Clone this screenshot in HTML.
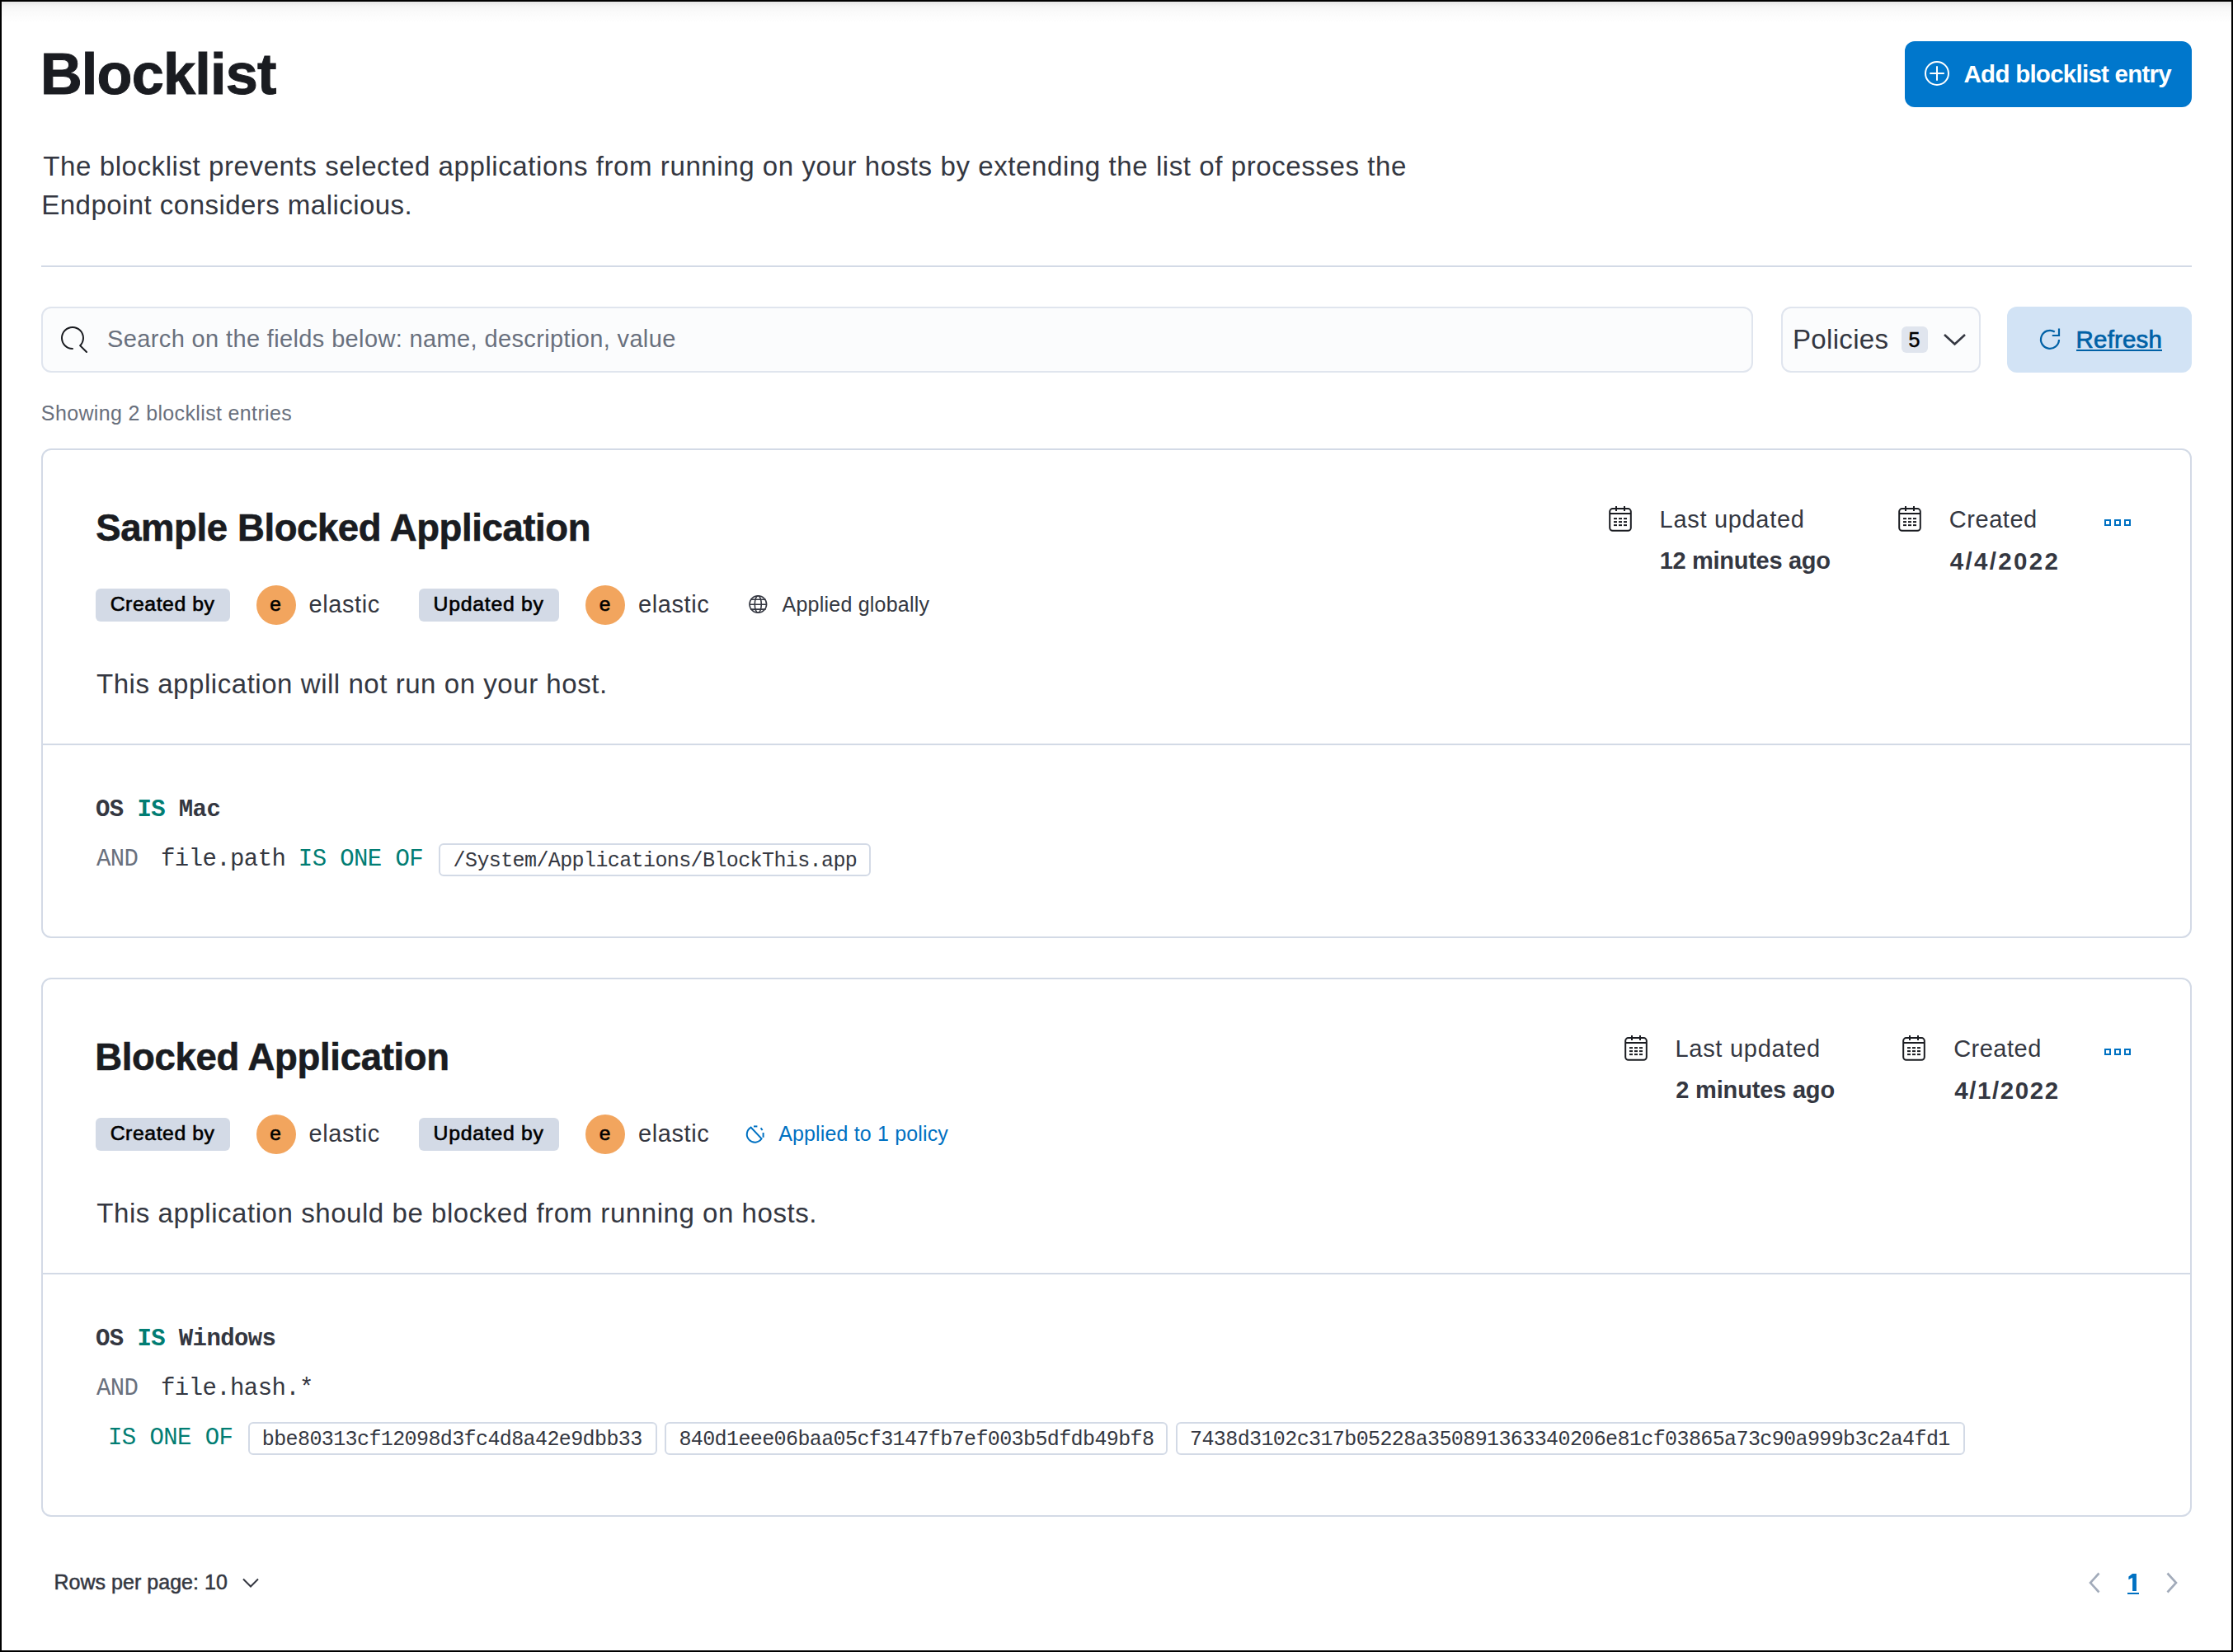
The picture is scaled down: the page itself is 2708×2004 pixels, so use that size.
<!DOCTYPE html>
<html><head><meta charset="utf-8"><style>
html,body{margin:0;padding:0;}
body{width:2708px;height:2004px;background:#000;position:relative;overflow:hidden;}
#page{position:absolute;left:2px;top:2px;width:2704px;height:2000px;background:#fff;overflow:hidden}
#shade{position:absolute;left:0;top:0;width:2704px;height:26px;background:linear-gradient(#e6e6e6,#f4f4f4 20%,#fafafa 45%,#fff)}
.t{position:absolute;white-space:pre;}
</style></head><body><div id="page"><div id="shade"></div></div>
<div style="position:absolute;left:0;top:0;width:2708px;height:2004px">
<div class="t" style="left:48.90px;top:55.18px;font-size:70.30px;line-height:70.30px;font-family:'Liberation Sans', sans-serif;font-weight:bold;color:#1a1c21;letter-spacing:-0.818px;-webkit-text-stroke:1px #1a1c21">Blocklist</div>
<div class="t" style="left:52.26px;top:184.97px;font-size:33.10px;line-height:33.10px;font-family:'Liberation Sans', sans-serif;font-weight:normal;color:#343741;letter-spacing:0.558px;">The blocklist prevents selected applications from running on your hosts by extending the list of processes the</div>
<div class="t" style="left:50.28px;top:232.37px;font-size:33.10px;line-height:33.10px;font-family:'Liberation Sans', sans-serif;font-weight:normal;color:#343741;letter-spacing:0.423px;">Endpoint considers malicious.</div>
<div style="position:absolute;left:2310px;top:50px;width:348px;height:80px;box-sizing:border-box;background:#0077cc;border-radius:12px"></div>
<svg style="position:absolute;left:2332px;top:72px" width="34" height="34" viewBox="0 0 34 34"><circle cx="17" cy="17" r="14" fill="none" stroke="#fff" stroke-width="2"/><path d="M17 8.3v17.5M8.3 17h17.5" stroke="#fff" stroke-width="2"/></svg>
<div class="t" style="left:2381.57px;top:75.02px;font-size:29.50px;line-height:29.50px;font-family:'Liberation Sans', sans-serif;font-weight:bold;color:#fff;letter-spacing:-0.742px;">Add blocklist entry</div>
<div style="position:absolute;left:50px;top:322px;width:2608px;height:2px;box-sizing:border-box;background:#d3dae6"></div>
<div style="position:absolute;left:50px;top:372px;width:2076px;height:80px;box-sizing:border-box;background:#fbfcfd;border:2px solid #e0e5ee;border-radius:12px"></div>
<svg style="position:absolute;left:74px;top:396px" width="32" height="32" viewBox="0 0 16 16"><path fill="#1a1c21" d="M11.271 11.978l3.872 3.873a.502.502 0 00.708 0 .502.502 0 000-.708l-3.565-3.564c2.38-2.747 2.267-6.923-.342-9.532-2.73-2.73-7.17-2.73-9.898 0-2.728 2.729-2.728 7.17 0 9.9a6.955 6.955 0 004.949 2.05.5.5 0 000-1 5.96 5.96 0 01-4.242-1.757 6.01 6.01 0 010-8.486c2.337-2.34 6.143-2.34 8.484 0a6.01 6.01 0 010 8.486.5.5 0 00.034.738z"/></svg>
<div class="t" style="left:130.08px;top:397.25px;font-size:29.00px;line-height:29.00px;font-family:'Liberation Sans', sans-serif;font-weight:normal;color:#69707d;letter-spacing:0.365px;">Search on the fields below: name, description, value</div>
<div style="position:absolute;left:2160px;top:372px;width:242px;height:80px;box-sizing:border-box;background:#fbfcfd;border:2px solid #e0e5ee;border-radius:12px"></div>
<div class="t" style="left:2173.98px;top:394.77px;font-size:33.10px;line-height:33.10px;font-family:'Liberation Sans', sans-serif;font-weight:normal;color:#343741;letter-spacing:0.294px;">Policies</div>
<div style="position:absolute;left:2306px;top:396px;width:32px;height:32px;box-sizing:border-box;background:#e0e5ee;border-radius:6px"></div>
<div class="t" style="left:2314.50px;top:400.33px;font-size:25.00px;line-height:25.00px;font-family:'Liberation Sans', sans-serif;font-weight:normal;color:#000;letter-spacing:0.000px;-webkit-text-stroke:0.5px #000">5</div>
<svg style="position:absolute;left:2354px;top:402px" width="32" height="20" viewBox="0 0 32 20"><path d="M4 4l12.5 11.5 12.5-11.5" fill="none" stroke="#343741" stroke-width="2.6"/></svg>
<div style="position:absolute;left:2434px;top:372px;width:224px;height:80px;box-sizing:border-box;background:#d2e3f5;border-radius:12px"></div>
<svg style="position:absolute;left:2470px;top:394px" width="32" height="36" viewBox="0 0 32 36"><path d="M21.8 8.5 A11 11 0 1 0 27 18" fill="none" stroke="#0061a6" stroke-width="2.2"/><path d="M27 4.5v8.5h-8.2" fill="none" stroke="#0061a6" stroke-width="2.2"/></svg>
<div class="t" style="left:2517.58px;top:397.02px;font-size:29.50px;line-height:29.50px;font-family:'Liberation Sans', sans-serif;font-weight:normal;color:#0061a6;letter-spacing:0.174px;-webkit-text-stroke:0.7px #0061a6">Refresh</div>
<div style="position:absolute;left:2518px;top:424px;width:104px;height:2px;box-sizing:border-box;background:#0061a6"></div>
<div class="t" style="left:49.86px;top:489.13px;font-size:25.00px;line-height:25.00px;font-family:'Liberation Sans', sans-serif;font-weight:normal;color:#69707d;letter-spacing:0.359px;">Showing 2 blocklist entries</div>
<div style="position:absolute;left:50px;top:544px;width:2608px;height:594px;box-sizing:border-box;border:2px solid #d3dae6;border-radius:12px;background:#fff"></div>
<div style="position:absolute;left:52px;top:902px;width:2604px;height:2px;box-sizing:border-box;background:#d3dae6"></div>
<div class="t" style="left:116.19px;top:618.48px;font-size:45.50px;line-height:45.50px;font-family:'Liberation Sans', sans-serif;font-weight:bold;color:#1a1c21;letter-spacing:-0.393px;-webkit-text-stroke:0.6px #1a1c21">Sample Blocked Application</div>
<div style="position:absolute;left:116px;top:714px;width:163px;height:40px;box-sizing:border-box;background:#d3dae6;border-radius:6px"></div>
<div class="t" style="left:133.64px;top:720.70px;font-size:24.80px;line-height:24.80px;font-family:'Liberation Sans', sans-serif;font-weight:normal;color:#000;letter-spacing:0.566px;-webkit-text-stroke:0.6px #000">Created by</div>
<div style="position:absolute;left:311px;top:710px;width:48px;height:48px;box-sizing:border-box;background:#f2a55e;border-radius:50%"></div>
<div class="t" style="left:327.26px;top:721.46px;font-size:24.50px;line-height:24.50px;font-family:'Liberation Sans', sans-serif;font-weight:normal;color:#000;letter-spacing:0.000px;-webkit-text-stroke:0.6px #000">e</div>
<div class="t" style="left:374.47px;top:719.35px;font-size:29.00px;line-height:29.00px;font-family:'Liberation Sans', sans-serif;font-weight:normal;color:#343741;letter-spacing:0.583px;">elastic</div>
<div style="position:absolute;left:508px;top:714px;width:170px;height:40px;box-sizing:border-box;background:#d3dae6;border-radius:6px"></div>
<div class="t" style="left:525.59px;top:720.70px;font-size:24.80px;line-height:24.80px;font-family:'Liberation Sans', sans-serif;font-weight:normal;color:#000;letter-spacing:0.735px;-webkit-text-stroke:0.6px #000">Updated by</div>
<div style="position:absolute;left:710px;top:710px;width:48px;height:48px;box-sizing:border-box;background:#f2a55e;border-radius:50%"></div>
<div class="t" style="left:726.76px;top:721.46px;font-size:24.50px;line-height:24.50px;font-family:'Liberation Sans', sans-serif;font-weight:normal;color:#000;letter-spacing:0.000px;-webkit-text-stroke:0.6px #000">e</div>
<div class="t" style="left:773.97px;top:719.35px;font-size:29.00px;line-height:29.00px;font-family:'Liberation Sans', sans-serif;font-weight:normal;color:#343741;letter-spacing:0.583px;">elastic</div>
<svg style="position:absolute;left:906px;top:720px" width="26" height="26" viewBox="0 0 26 26"><g fill="none" stroke="#343741" stroke-width="1.6"><circle cx="13.3" cy="13" r="10.3"/><ellipse cx="13.3" cy="13" rx="4" ry="10.3"/><path d="M4 7.2h18.6M3 13.2h20.6M4 19.1h18.6"/></g></svg>
<div class="t" style="left:948.55px;top:720.53px;font-size:25.00px;line-height:25.00px;font-family:'Liberation Sans', sans-serif;font-weight:normal;color:#343741;letter-spacing:0.225px;">Applied globally</div>
<div class="t" style="left:116.96px;top:812.77px;font-size:33.10px;line-height:33.10px;font-family:'Liberation Sans', sans-serif;font-weight:normal;color:#343741;letter-spacing:0.515px;">This application will not run on your host.</div>
<svg style="position:absolute;left:1951px;top:614px" width="29" height="31" viewBox="0 0 29 31"><g fill="none" stroke="#1a1c21" stroke-width="2"><rect x="1.2" y="3.1" width="25.6" height="26.6" rx="3.5"/><path d="M1.2 9h25.6M9 0v6M19 0v6"/></g><g fill="#1a1c21"><rect x="6" y="14.1" width="4" height="2"/><rect x="12" y="14.1" width="4" height="2"/><rect x="18" y="14.1" width="4" height="2"/><rect x="6" y="18.1" width="4" height="2"/><rect x="12" y="18.1" width="4" height="2"/><rect x="18" y="18.1" width="4" height="2"/><rect x="6" y="22.1" width="4" height="2"/><rect x="12" y="22.1" width="4" height="2"/><rect x="18" y="22.1" width="4" height="2"/></g></svg>
<div class="t" style="left:2012.62px;top:616.05px;font-size:29.00px;line-height:29.00px;font-family:'Liberation Sans', sans-serif;font-weight:normal;color:#343741;letter-spacing:0.686px;">Last updated</div>
<div class="t" style="left:2012.67px;top:666.35px;font-size:29.00px;line-height:29.00px;font-family:'Liberation Sans', sans-serif;font-weight:bold;color:#343741;letter-spacing:-0.289px;">12 minutes ago</div>
<svg style="position:absolute;left:2302px;top:614px" width="29" height="31" viewBox="0 0 29 31"><g fill="none" stroke="#1a1c21" stroke-width="2"><rect x="1.2" y="3.1" width="25.6" height="26.6" rx="3.5"/><path d="M1.2 9h25.6M9 0v6M19 0v6"/></g><g fill="#1a1c21"><rect x="6" y="14.1" width="4" height="2"/><rect x="12" y="14.1" width="4" height="2"/><rect x="18" y="14.1" width="4" height="2"/><rect x="6" y="18.1" width="4" height="2"/><rect x="12" y="18.1" width="4" height="2"/><rect x="18" y="18.1" width="4" height="2"/><rect x="6" y="22.1" width="4" height="2"/><rect x="12" y="22.1" width="4" height="2"/><rect x="18" y="22.1" width="4" height="2"/></g></svg>
<div class="t" style="left:2363.83px;top:616.25px;font-size:29.00px;line-height:29.00px;font-family:'Liberation Sans', sans-serif;font-weight:normal;color:#343741;letter-spacing:0.528px;">Created</div>
<div class="t" style="left:2364.85px;top:666.42px;font-size:29.50px;line-height:29.50px;font-family:'Liberation Sans', sans-serif;font-weight:bold;color:#343741;letter-spacing:2.314px;">4/4/2022</div>
<svg style="position:absolute;left:2550px;top:628px" width="36" height="12" viewBox="0 0 36 12"><g fill="none" stroke="#0071c2" stroke-width="2"><rect x="3" y="3" width="6" height="6"/><rect x="15" y="3" width="6" height="6"/><rect x="27" y="3" width="6" height="6"/></g></svg>
<div style="position:absolute;left:50px;top:1186px;width:2608px;height:654px;box-sizing:border-box;border:2px solid #d3dae6;border-radius:12px;background:#fff"></div>
<div style="position:absolute;left:52px;top:1544px;width:2604px;height:2px;box-sizing:border-box;background:#d3dae6"></div>
<div class="t" style="left:115.26px;top:1260.48px;font-size:45.50px;line-height:45.50px;font-family:'Liberation Sans', sans-serif;font-weight:bold;color:#1a1c21;letter-spacing:-0.327px;-webkit-text-stroke:0.6px #1a1c21">Blocked Application</div>
<div style="position:absolute;left:116px;top:1356px;width:163px;height:40px;box-sizing:border-box;background:#d3dae6;border-radius:6px"></div>
<div class="t" style="left:133.64px;top:1362.70px;font-size:24.80px;line-height:24.80px;font-family:'Liberation Sans', sans-serif;font-weight:normal;color:#000;letter-spacing:0.566px;-webkit-text-stroke:0.6px #000">Created by</div>
<div style="position:absolute;left:311px;top:1352px;width:48px;height:48px;box-sizing:border-box;background:#f2a55e;border-radius:50%"></div>
<div class="t" style="left:327.26px;top:1363.46px;font-size:24.50px;line-height:24.50px;font-family:'Liberation Sans', sans-serif;font-weight:normal;color:#000;letter-spacing:0.000px;-webkit-text-stroke:0.6px #000">e</div>
<div class="t" style="left:374.47px;top:1361.35px;font-size:29.00px;line-height:29.00px;font-family:'Liberation Sans', sans-serif;font-weight:normal;color:#343741;letter-spacing:0.583px;">elastic</div>
<div style="position:absolute;left:508px;top:1356px;width:170px;height:40px;box-sizing:border-box;background:#d3dae6;border-radius:6px"></div>
<div class="t" style="left:525.59px;top:1362.70px;font-size:24.80px;line-height:24.80px;font-family:'Liberation Sans', sans-serif;font-weight:normal;color:#000;letter-spacing:0.735px;-webkit-text-stroke:0.6px #000">Updated by</div>
<div style="position:absolute;left:710px;top:1352px;width:48px;height:48px;box-sizing:border-box;background:#f2a55e;border-radius:50%"></div>
<div class="t" style="left:726.76px;top:1363.46px;font-size:24.50px;line-height:24.50px;font-family:'Liberation Sans', sans-serif;font-weight:normal;color:#000;letter-spacing:0.000px;-webkit-text-stroke:0.6px #000">e</div>
<div class="t" style="left:773.97px;top:1361.35px;font-size:29.00px;line-height:29.00px;font-family:'Liberation Sans', sans-serif;font-weight:normal;color:#343741;letter-spacing:0.583px;">elastic</div>
<svg style="position:absolute;left:902px;top:1362px" width="28" height="28" viewBox="0 0 28 28"><g fill="none" stroke="#0071c2" stroke-width="2"><path d="M8.6 5.6 A9.7 9.7 0 1 0 21.6 19.3 Z"/><path d="M12 4.4h4.4"/><path d="M20.6 6.4l2 2.6"/><path d="M23.6 12v5.8"/></g></svg>
<div class="t" style="left:944.15px;top:1362.53px;font-size:25.00px;line-height:25.00px;font-family:'Liberation Sans', sans-serif;font-weight:normal;color:#0071c2;letter-spacing:0.155px;">Applied to 1 policy</div>
<div class="t" style="left:117.26px;top:1454.97px;font-size:33.10px;line-height:33.10px;font-family:'Liberation Sans', sans-serif;font-weight:normal;color:#343741;letter-spacing:0.522px;">This application should be blocked from running on hosts.</div>
<svg style="position:absolute;left:1970px;top:1256px" width="29" height="31" viewBox="0 0 29 31"><g fill="none" stroke="#1a1c21" stroke-width="2"><rect x="1.2" y="3.1" width="25.6" height="26.6" rx="3.5"/><path d="M1.2 9h25.6M9 0v6M19 0v6"/></g><g fill="#1a1c21"><rect x="6" y="14.1" width="4" height="2"/><rect x="12" y="14.1" width="4" height="2"/><rect x="18" y="14.1" width="4" height="2"/><rect x="6" y="18.1" width="4" height="2"/><rect x="12" y="18.1" width="4" height="2"/><rect x="18" y="18.1" width="4" height="2"/><rect x="6" y="22.1" width="4" height="2"/><rect x="12" y="22.1" width="4" height="2"/><rect x="18" y="22.1" width="4" height="2"/></g></svg>
<div class="t" style="left:2031.42px;top:1258.05px;font-size:29.00px;line-height:29.00px;font-family:'Liberation Sans', sans-serif;font-weight:normal;color:#343741;letter-spacing:0.732px;">Last updated</div>
<div class="t" style="left:2032.29px;top:1308.35px;font-size:29.00px;line-height:29.00px;font-family:'Liberation Sans', sans-serif;font-weight:bold;color:#343741;letter-spacing:-0.179px;">2 minutes ago</div>
<svg style="position:absolute;left:2307px;top:1256px" width="29" height="31" viewBox="0 0 29 31"><g fill="none" stroke="#1a1c21" stroke-width="2"><rect x="1.2" y="3.1" width="25.6" height="26.6" rx="3.5"/><path d="M1.2 9h25.6M9 0v6M19 0v6"/></g><g fill="#1a1c21"><rect x="6" y="14.1" width="4" height="2"/><rect x="12" y="14.1" width="4" height="2"/><rect x="18" y="14.1" width="4" height="2"/><rect x="6" y="18.1" width="4" height="2"/><rect x="12" y="18.1" width="4" height="2"/><rect x="18" y="18.1" width="4" height="2"/><rect x="6" y="22.1" width="4" height="2"/><rect x="12" y="22.1" width="4" height="2"/><rect x="18" y="22.1" width="4" height="2"/></g></svg>
<div class="t" style="left:2369.13px;top:1258.25px;font-size:29.00px;line-height:29.00px;font-family:'Liberation Sans', sans-serif;font-weight:normal;color:#343741;letter-spacing:0.495px;">Created</div>
<div class="t" style="left:2370.15px;top:1308.42px;font-size:29.50px;line-height:29.50px;font-family:'Liberation Sans', sans-serif;font-weight:bold;color:#343741;letter-spacing:1.600px;">4/1/2022</div>
<svg style="position:absolute;left:2550px;top:1270px" width="36" height="12" viewBox="0 0 36 12"><g fill="none" stroke="#0071c2" stroke-width="2"><rect x="3" y="3" width="6" height="6"/><rect x="15" y="3" width="6" height="6"/><rect x="27" y="3" width="6" height="6"/></g></svg>
<div class="t" style="left:115.98px;top:967.78px;font-size:29px;line-height:29px;font-family:'Liberation Mono',monospace;font-weight:bold;color:#343741;letter-spacing:-0.603px">OS <span style="color:#017d73">IS</span> Mac</div>
<div class="t" style="left:117.00px;top:1027.78px;font-size:29px;line-height:29px;font-family:'Liberation Mono',monospace;color:#69707d;letter-spacing:-0.603px">AND</div>
<div class="t" style="left:195.05px;top:1027.78px;font-size:29px;line-height:29px;font-family:'Liberation Mono',monospace;color:#343741;letter-spacing:-0.603px">file.path</div>
<div class="t" style="left:115.98px;top:1609.78px;font-size:29px;line-height:29px;font-family:'Liberation Mono',monospace;font-weight:bold;color:#343741;letter-spacing:-0.603px">OS <span style="color:#017d73">IS</span> Windows</div>
<div class="t" style="left:117.00px;top:1669.78px;font-size:29px;line-height:29px;font-family:'Liberation Mono',monospace;color:#69707d;letter-spacing:-0.603px">AND</div>
<div class="t" style="left:195.05px;top:1669.78px;font-size:29px;line-height:29px;font-family:'Liberation Mono',monospace;color:#343741;letter-spacing:-0.603px">file.hash.*</div>
<div class="t" style="left:361.84px;top:1027.78px;font-size:29px;line-height:29px;font-family:'Liberation Mono',monospace;color:#017d73;letter-spacing:-0.603px">IS ONE OF</div>
<div class="t" style="left:131.04px;top:1729.78px;font-size:29px;line-height:29px;font-family:'Liberation Mono',monospace;color:#017d73;letter-spacing:-0.603px">IS ONE OF</div>
<div style="position:absolute;left:532px;top:1023px;width:524px;height:40px;box-sizing:border-box;border:2px solid #d3dae6;border-radius:6px;background:#fff"></div>
<div class="t" style="left:549.61px;top:1032.05px;font-size:25px;line-height:25px;font-family:'Liberation Mono',monospace;color:#343741;letter-spacing:-0.602px">/System/Applications/BlockThis.app</div>
<div style="position:absolute;left:301px;top:1725px;width:496px;height:40px;box-sizing:border-box;border:2px solid #d3dae6;border-radius:6px;background:#fff"></div>
<div class="t" style="left:317.81px;top:1734.05px;font-size:25px;line-height:25px;font-family:'Liberation Mono',monospace;color:#343741;letter-spacing:-0.602px">bbe80313cf12098d3fc4d8a42e9dbb33</div>
<div style="position:absolute;left:806px;top:1725px;width:610px;height:40px;box-sizing:border-box;border:2px solid #d3dae6;border-radius:6px;background:#fff"></div>
<div class="t" style="left:823.38px;top:1734.05px;font-size:25px;line-height:25px;font-family:'Liberation Mono',monospace;color:#343741;letter-spacing:-0.602px">840d1eee06baa05cf3147fb7ef003b5dfdb49bf8</div>
<div style="position:absolute;left:1426px;top:1725px;width:957px;height:40px;box-sizing:border-box;border:2px solid #d3dae6;border-radius:6px;background:#fff"></div>
<div class="t" style="left:1443.07px;top:1734.05px;font-size:25px;line-height:25px;font-family:'Liberation Mono',monospace;color:#343741;letter-spacing:-0.602px">7438d3102c317b05228a350891363340206e81cf03865a73c90a999b3c2a4fd1</div>
<div class="t" style="left:65.45px;top:1906.83px;font-size:25.00px;line-height:25.00px;font-family:'Liberation Sans', sans-serif;font-weight:normal;color:#343741;letter-spacing:0.036px;-webkit-text-stroke:0.5px #343741">Rows per page: 10</div>
<svg style="position:absolute;left:292px;top:1912px" width="24" height="16" viewBox="0 0 24 16"><path d="M3 3.5l9 9 9-9" fill="none" stroke="#343741" stroke-width="2"/></svg>
<svg style="position:absolute;left:2530px;top:1904px" width="20" height="32" viewBox="0 0 20 32"><path d="M15.5 4.5L5 16l10.5 11.5" fill="none" stroke="#a2abba" stroke-width="2.6"/></svg>
<svg style="position:absolute;left:2624px;top:1904px" width="20" height="32" viewBox="0 0 20 32"><path d="M4.5 4.5L15 16 4.5 27.5" fill="none" stroke="#a2abba" stroke-width="2.6"/></svg>
<svg style="position:absolute;left:2574px;top:1902px" width="26" height="36" viewBox="0 0 26 36"><path fill="#0071c2" d="M12.1 7h4.8v20.9h-4.8v-16.1l-4.7 2.4v-3.7z"/></svg>
<div style="position:absolute;left:2580px;top:1932px;width:14px;height:2px;box-sizing:border-box;background:#0071c2"></div>
</div></body></html>
